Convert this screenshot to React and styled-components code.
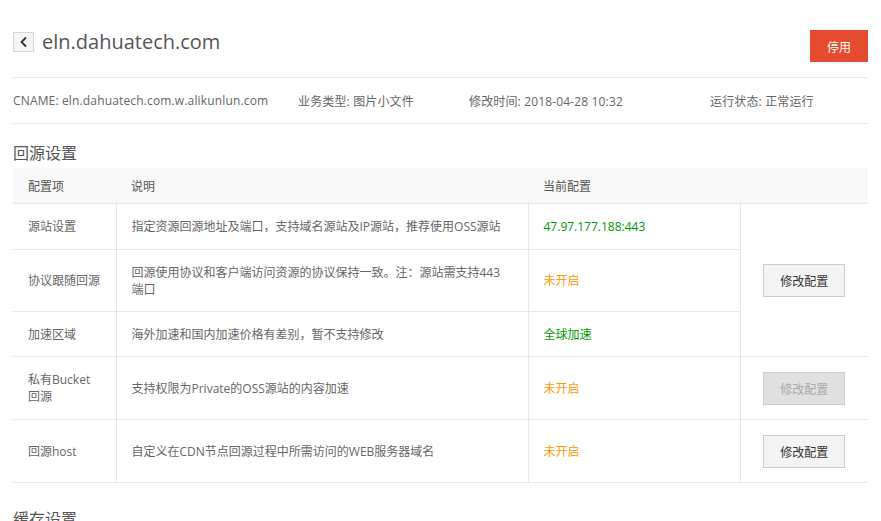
import React from "react";
import styled, { createGlobalStyle } from "styled-components";

const Global = createGlobalStyle`
  html, body { margin: 0; padding: 0; background: #fff; }
  body {
    font-family: "Open Sans", "Noto Sans CJK SC", sans-serif;
    color: #666;
    font-size: 12px;
  }
`;

const Page = styled.div`
  padding: 0 13px;
  overflow: hidden;
  height: 521px;
`;

const Header = styled.div`
  display: flex;
  align-items: flex-start;
  justify-content: space-between;
  height: 78px;
  padding-top: 30px;
  box-sizing: border-box;
  border-bottom: 1px solid #e8e8e8;
`;

const TitleWrap = styled.div`
  display: flex;
  align-items: center;
  gap: 8px;
  margin-top: 2px;
  height: 20px;
`;

const BackBtn = styled.div`
  width: 19px;
  height: 18px;
  border: 1px solid #d6d6d6;
  background: #f5f5f5;
  display: flex;
  align-items: center;
  justify-content: center;
`;

const Title = styled.h1`
  margin: 0;
  font-size: 20px;
  line-height: 20px;
  font-weight: normal;
  color: #555;
`;

const DangerButton = styled.button`
  width: 58px;
  height: 32px;
  border: none;
  background: #e54c2f;
  color: #fff;
  font-family: "Noto Sans CJK SC", sans-serif;
  font-size: 12px;
`;

const Info = styled.div`
  display: grid;
  grid-template-columns: 285px 171px 241px 1fr;
  align-items: center;
  height: 45px;
  border-bottom: 1px solid #e8e8e8;
  color: #666;
  letter-spacing: 0.15px;
`;

const SectionTitle = styled.h2`
  margin: 0;
  font-size: 16px;
  font-weight: normal;
  color: #555;
  font-family: "Noto Sans CJK SC", sans-serif;
  padding: ${p => p.$top ?? 18}px 0 6px;
  line-height: 20px;
`;

const Table = styled.table`
  width: 100%;
  border-collapse: collapse;
  table-layout: fixed;
`;

const Th = styled.th`
  background: #f8f8f8;
  height: 35px;
  font-weight: normal;
  text-align: left;
  padding: 0 15px;
  color: #555;
  border-bottom: 1px solid #e8e8e8;
`;

const Td = styled.td`
  height: ${p => p.$h}px;
  padding: 0 ${p => p.$padRight ?? 15}px 0 15px;
  border-bottom: 1px solid #e8e8e8;
  border-left: ${p => (p.$first ? "none" : "1px solid #e8e8e8")};
  line-height: 17px;
  color: ${p => p.$color || "#666"};
  text-align: ${p => (p.$center ? "center" : "left")};
  box-sizing: border-box;
`;

const EditButton = styled.button`
  width: 82px;
  height: 33px;
  border: 1px solid #ccc;
  background: ${p => (p.disabled ? "#e0e0e0" : "#f4f4f4")};
  color: ${p => (p.disabled ? "#aaa" : "#333")};
  font-family: "Noto Sans CJK SC", sans-serif;
  font-size: 12px;
`;

const GREEN = "#009900";
const ORANGE = "#ff9900";

const rows = [
  { name: "源站设置", desc: "指定资源回源地址及端口，支持域名源站及IP源站，推荐使用OSS源站", value: "47.97.177.188:443", color: GREEN, h: 46, group: 3 },
  { name: "协议跟随回源", desc: "回源使用协议和客户端访问资源的协议保持一致。注：源站需支持443端口", value: "未开启", color: ORANGE, h: 62 },
  { name: "加速区域", desc: "海外加速和国内加速价格有差别，暂不支持修改", value: "全球加速", color: GREEN, h: 45 },
  { name: "私有Bucket回源", desc: "支持权限为Private的OSS源站的内容加速", value: "未开启", color: ORANGE, h: 63, group: 1, disabled: true },
  { name: "回源host", desc: "自定义在CDN节点回源过程中所需访问的WEB服务器域名", value: "未开启", color: ORANGE, h: 63, group: 1 },
];

export default function App() {
  return (
    <Page>
      <Global />
      <Header>
        <TitleWrap>
          <BackBtn>
            <svg width="10" height="12" viewBox="0 0 10 12">
              <path d="M7 1.5 L2.5 6 L7 10.5" fill="none" stroke="#333" strokeWidth="1.8" />
            </svg>
          </BackBtn>
          <Title>eln.dahuatech.com</Title>
        </TitleWrap>
        <DangerButton>停用</DangerButton>
      </Header>
      <Info>
        <span>CNAME: eln.dahuatech.com.w.alikunlun.com</span>
        <span>业务类型: 图片小文件</span>
        <span>修改时间: 2018-04-28 10:32</span>
        <span>运行状态: 正常运行</span>
      </Info>
      <SectionTitle>回源设置</SectionTitle>
      <Table>
        <colgroup>
          <col style={{ width: 103 }} />
          <col style={{ width: 412 }} />
          <col style={{ width: 212 }} />
          <col />
        </colgroup>
        <thead>
          <tr>
            <Th>配置项</Th>
            <Th>说明</Th>
            <Th>当前配置</Th>
            <Th />
          </tr>
        </thead>
        <tbody>
          {rows.map(r => (
            <tr key={r.name}>
              <Td $first $h={r.h}>{r.name}</Td>
              <Td $h={r.h} $padRight={20}>{r.desc}</Td>
              <Td $h={r.h} $color={r.color}>{r.value}</Td>
              {r.group && (
                <Td rowSpan={r.group} $center $h={r.h}>
                  <EditButton disabled={r.disabled}>修改配置</EditButton>
                </Td>
              )}
            </tr>
          ))}
        </tbody>
      </Table>
      <SectionTitle $top={25}>缓存设置</SectionTitle>
    </Page>
  );
}
